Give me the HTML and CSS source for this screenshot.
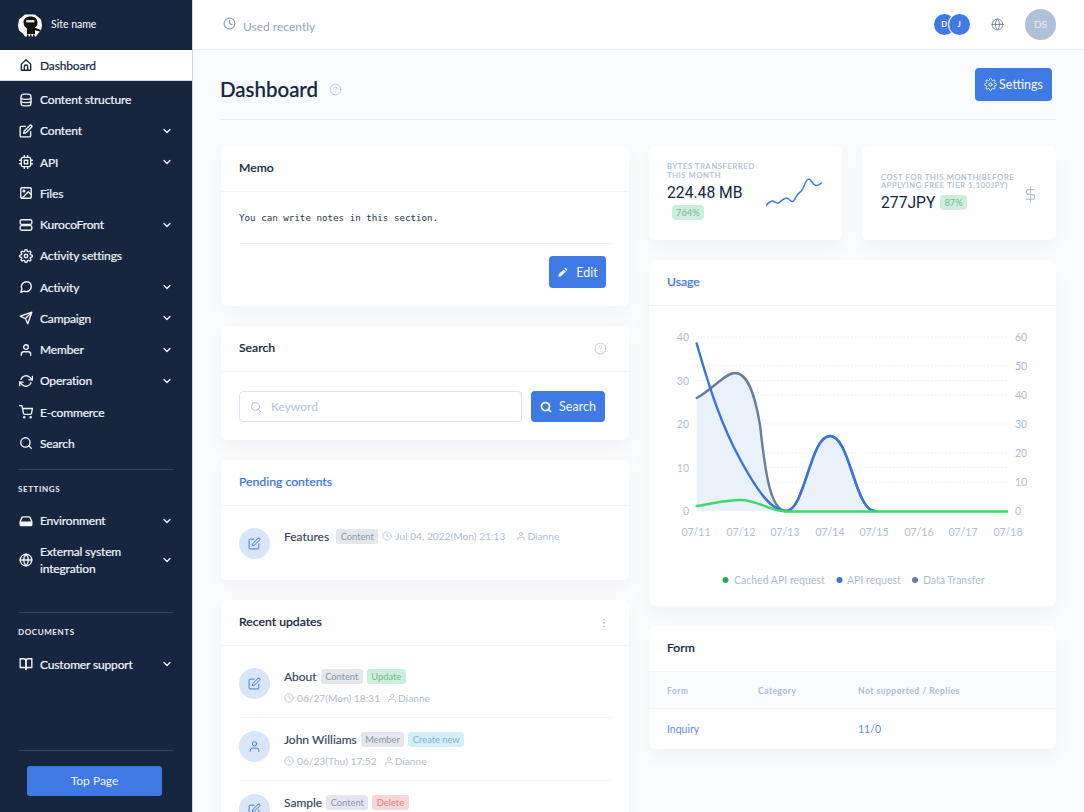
FILE: index.html
```html
<!DOCTYPE html>
<html lang="en">
<head>
<meta charset="utf-8">
<title>Dashboard</title>
<link rel="stylesheet" href="styles.css">
</head>
<body>
<svg class="sprite" xmlns="http://www.w3.org/2000/svg">
  <symbol id="i-home" viewBox="0 0 24 24"><path d="M4 10.500 12 3l8 7.500V20a1 1 0 0 1-1 1H5a1 1 0 0 1-1-1z"/><path d="M9 21v-6a3 3 0 0 1 6 0v6"/></symbol>
  <symbol id="i-db" viewBox="0 0 24 24"><rect x="3.500" y="2" width="17" height="20" rx="5"/><path d="M3.500 9.500c3 2 14 2 17 0M3.500 15c3 2 14 2 17 0"/></symbol>
  <symbol id="i-edit" viewBox="0 0 24 24"><path d="M11 4H4a2 2 0 0 0-2 2v14a2 2 0 0 0 2 2h14a2 2 0 0 0 2-2v-7"/><path d="M18.500 2.500a2.121 2.121 0 0 1 3 3L12 15l-4 1 1-4 9.500-9.500z"/></symbol>
  <symbol id="i-cpu" viewBox="0 0 24 24"><rect x="4" y="4" width="16" height="16" rx="3"/><rect x="9" y="9" width="6" height="6"/><path d="M9 1v3M15 1v3M9 20v3M15 20v3M20 9h3M20 15h3M1 9h3M1 15h3"/></symbol>
  <symbol id="i-image" viewBox="0 0 24 24"><rect x="3" y="3" width="18" height="18" rx="2"/><circle cx="8.500" cy="8.500" r="1.500"/><path d="M21 15l-5-5L5 21"/></symbol>
  <symbol id="i-server" viewBox="0 0 24 24"><rect x="2" y="3" width="20" height="8" rx="2.500"/><rect x="2" y="13" width="20" height="8" rx="2.500"/></symbol>
  <symbol id="i-gear" viewBox="0 0 24 24"><circle cx="12" cy="12" r="3"/><path d="M19.400 15a1.650 1.650 0 0 0 .33 1.820l.06.06a2 2 0 0 1 0 2.830 2 2 0 0 1-2.830 0l-.06-.06a1.650 1.650 0 0 0-1.820-.33 1.650 1.650 0 0 0-1 1.510V21a2 2 0 0 1-2 2 2 2 0 0 1-2-2v-.09A1.650 1.650 0 0 0 9 19.400a1.650 1.650 0 0 0-1.820.33l-.06.06a2 2 0 0 1-2.830 0 2 2 0 0 1 0-2.830l.06-.06a1.650 1.650 0 0 0 .33-1.820 1.650 1.650 0 0 0-1.510-1H3a2 2 0 0 1-2-2 2 2 0 0 1 2-2h.09A1.650 1.650 0 0 0 4.600 9a1.650 1.650 0 0 0-.33-1.820l-.06-.06a2 2 0 0 1 0-2.830 2 2 0 0 1 2.830 0l.06.06a1.650 1.650 0 0 0 1.820.33H9a1.650 1.650 0 0 0 1-1.510V3a2 2 0 0 1 2-2 2 2 0 0 1 2 2v.09a1.650 1.650 0 0 0 1 1.510 1.650 1.650 0 0 0 1.820-.33l.06-.06a2 2 0 0 1 2.830 0 2 2 0 0 1 0 2.830l-.06.06a1.650 1.650 0 0 0-.33 1.820V9a1.650 1.650 0 0 0 1.510 1H21a2 2 0 0 1 2 2 2 2 0 0 1-2 2h-.09a1.650 1.650 0 0 0-1.510 1z"/></symbol>
  <symbol id="i-msg" viewBox="0 0 24 24"><path d="M21 11.500a8.380 8.380 0 0 1-.9 3.800 8.500 8.500 0 0 1-7.600 4.700 8.380 8.380 0 0 1-3.800-.9L3 21l1.900-5.700a8.380 8.380 0 0 1-.9-3.800 8.500 8.500 0 0 1 4.700-7.600 8.380 8.380 0 0 1 3.800-.9h.5a8.480 8.480 0 0 1 8 8v.5z"/></symbol>
  <symbol id="i-send" viewBox="0 0 24 24"><path d="M22 2 11 13M22 2l-7 20-4-9-9-4z"/></symbol>
  <symbol id="i-user" viewBox="0 0 24 24"><path d="M20 21v-2a4 4 0 0 0-4-4H8a4 4 0 0 0-4 4v2"/><circle cx="12" cy="7" r="4"/></symbol>
  <symbol id="i-refresh" viewBox="0 0 24 24"><path d="M23 4v6h-6M1 20v-6h6"/><path d="M3.510 9a9 9 0 0 1 14.850-3.360L23 10M1 14l4.640 4.360A9 9 0 0 0 20.490 15"/></symbol>
  <symbol id="i-cart" viewBox="0 0 24 24"><circle cx="9" cy="21" r="1"/><circle cx="20" cy="21" r="1"/><path d="M1 1h4l2.680 13.390a2 2 0 0 0 2 1.610h9.720a2 2 0 0 0 2-1.610L23 6H6"/></symbol>
  <symbol id="i-search" viewBox="0 0 24 24"><circle cx="11" cy="11" r="8"/><path d="M21 21l-4.350-4.350"/></symbol>
  <symbol id="i-drive" viewBox="0 0 24 24"><path d="M2 13 5 6.200A2 2 0 0 1 6.800 5h10.400A2 2 0 0 1 19 6.200L22 13v5a2 2 0 0 1-2 2H4a2 2 0 0 1-2-2z"/><path class="solid" d="M2 13h20v5a2 2 0 0 1-2 2H4a2 2 0 0 1-2-2z"/></symbol>
  <symbol id="i-globe" viewBox="0 0 24 24"><circle cx="12" cy="12" r="10"/><path d="M2 12h20"/><path d="M12 2a15.300 15.300 0 0 1 4 10 15.300 15.300 0 0 1-4 10 15.300 15.300 0 0 1-4-10 15.300 15.300 0 0 1 4-10z"/></symbol>
  <symbol id="i-book" viewBox="0 0 24 24"><path d="M2 3h6a4 4 0 0 1 4 4v14a3 3 0 0 0-3-3H2z"/><path d="M22 3h-6a4 4 0 0 0-4 4v14a3 3 0 0 1 3-3h7z"/></symbol>
  <symbol id="i-clock" viewBox="0 0 24 24"><circle cx="12" cy="12" r="10"/><path d="M12 6v6l4 2"/></symbol>
  <symbol id="i-help" viewBox="0 0 24 24"><circle cx="12" cy="12" r="10"/><path d="M9.090 9a3 3 0 0 1 5.830 1c0 2-3 3-3 3M12 17h.01"/></symbol>
  <symbol id="i-chev" viewBox="0 0 24 24"><path d="M6 9l6 6 6-6"/></symbol>
  <symbol id="i-dollar" viewBox="0 0 24 24"><path d="M12 1v22"/><path d="M17 5H9.500a3.500 3.500 0 0 0 0 7h5a3.500 3.500 0 0 1 0 7H6"/></symbol>
  <symbol id="i-more" viewBox="0 0 24 24"><circle cx="12" cy="5" r="1"/><circle cx="12" cy="12" r="1"/><circle cx="12" cy="19" r="1"/></symbol>
  <symbol id="i-pencil" viewBox="0 0 24 24"><path class="solid" d="M3 21.500l1.200-6L14.500 5.200l4.800 4.800L9 20.300zM16 3.700l1.600-1.500a1.500 1.500 0 0 1 2.100 0l2.600 2.600a1.500 1.500 0 0 1 0 2.100L20.700 8.500z"/></symbol>
</svg>

<div class="app">
  <aside class="sidebar">
    <div class="brand">
      <svg class="logo" viewBox="0 0 24 24" aria-hidden="true">
        <path class="logo-bg" d="M7 .500h10l6 5 1 6-1 5-3 3-2 3H7l-2-3-4-3-1-5 1-6z"/>
        <path class="logo-ninja" d="M5.500 8.500C5.500 4.500 8.500 2.500 12.500 2.500S19.500 4.500 19.500 8.500c0 2.500-1 4.200-2.500 5.300l6 2.200-.7 1.800L17 16.300V20H9v-5.500C6.800 13 5.500 11 5.500 8.500z"/>
        <rect class="logo-eye" x="8" y="6" width="8.500" height="2.500" rx="1"/>
        <path class="logo-ninja" d="M9 20.500h1.500V23H9zM12 20.500h1.500V23H12zM15 20.500h1.500V23H15z"/>
      </svg>
      <span class="brand-name">Site name</span>
    </div>
    <a class="nav-item active"><svg class="ico"><use href="#i-home"/></svg><span>Dashboard</span></a>
    <nav class="nav-list">
      <a class="nav-item"><svg class="ico"><use href="#i-db"/></svg><span>Content structure</span></a>
      <a class="nav-item"><svg class="ico"><use href="#i-edit"/></svg><span>Content</span><svg class="chev"><use href="#i-chev"/></svg></a>
      <a class="nav-item"><svg class="ico"><use href="#i-cpu"/></svg><span>API</span><svg class="chev"><use href="#i-chev"/></svg></a>
      <a class="nav-item"><svg class="ico"><use href="#i-image"/></svg><span>Files</span></a>
      <a class="nav-item"><svg class="ico"><use href="#i-server"/></svg><span>KurocoFront</span><svg class="chev"><use href="#i-chev"/></svg></a>
      <a class="nav-item"><svg class="ico"><use href="#i-gear"/></svg><span>Activity settings</span></a>
      <a class="nav-item"><svg class="ico"><use href="#i-msg"/></svg><span>Activity</span><svg class="chev"><use href="#i-chev"/></svg></a>
      <a class="nav-item"><svg class="ico"><use href="#i-send"/></svg><span>Campaign</span><svg class="chev"><use href="#i-chev"/></svg></a>
      <a class="nav-item"><svg class="ico"><use href="#i-user"/></svg><span>Member</span><svg class="chev"><use href="#i-chev"/></svg></a>
      <a class="nav-item"><svg class="ico"><use href="#i-refresh"/></svg><span>Operation</span><svg class="chev"><use href="#i-chev"/></svg></a>
      <a class="nav-item"><svg class="ico"><use href="#i-cart"/></svg><span>E-commerce</span></a>
      <a class="nav-item"><svg class="ico"><use href="#i-search"/></svg><span>Search</span></a>
    </nav>
    <hr class="side-rule rule-settings">
    <div class="side-label">SETTINGS</div>
    <a class="nav-item"><svg class="ico"><use href="#i-drive"/></svg><span>Environment</span><svg class="chev"><use href="#i-chev"/></svg></a>
    <a class="nav-item tall"><svg class="ico"><use href="#i-globe"/></svg><span>External system<br>integration</span><svg class="chev"><use href="#i-chev"/></svg></a>
    <hr class="side-rule rule-docs">
    <div class="side-label">DOCUMENTS</div>
    <a class="nav-item"><svg class="ico"><use href="#i-book"/></svg><span>Customer support</span><svg class="chev"><use href="#i-chev"/></svg></a>
    <div class="side-foot">
      <hr class="side-rule foot-rule">
      <a class="top-btn">Top Page</a>
    </div>
  </aside>

  <div class="main">
    <header class="topbar">
      <svg class="ico top-clock"><use href="#i-clock"/></svg>
      <span class="recent">Used recently</span>
      <div class="top-right">
        <div class="avatars"><span class="mini">D</span><span class="mini second">J</span></div>
        <svg class="ico top-globe"><use href="#i-globe"/></svg>
        <span class="me">DS</span>
      </div>
    </header>

    <div class="content">
      <div class="page-head">
        <h1>Dashboard</h1>
        <svg class="ico help title-help"><use href="#i-help"/></svg>
        <a class="btn settings-btn"><svg class="ico"><use href="#i-gear"/></svg>Settings</a>
      </div>

      <div class="columns">
        <div class="col">
          <section class="card">
            <div class="card-head"><h2>Memo</h2></div>
            <div class="memo-body">
              <pre class="memo-text">You can write notes in this section.</pre>
              <div class="memo-foot"><a class="btn edit-btn"><svg class="ico"><use href="#i-pencil"/></svg>Edit</a></div>
            </div>
          </section>

          <section class="card">
            <div class="card-head"><h2>Search</h2><svg class="ico help"><use href="#i-help"/></svg></div>
            <div class="search-body">
              <label class="search-field"><svg class="ico"><use href="#i-search"/></svg><span>Keyword</span></label>
              <a class="btn search-btn"><svg class="ico"><use href="#i-search"/></svg>Search</a>
            </div>
          </section>

          <section class="card">
            <div class="card-head"><h2 class="link">Pending contents</h2></div>
            <div class="pending-body">
              <span class="round"><svg class="ico"><use href="#i-edit"/></svg></span>
              <div class="inline-row">
                <span class="row-title">Features</span>
                <span class="tag gray">Content</span>
                <span class="meta"><svg class="ico"><use href="#i-clock"/></svg>Jul 04, 2022(Mon) 21:13</span>
                <span class="meta by"><svg class="ico"><use href="#i-user"/></svg>Dianne</span>
              </div>
            </div>
          </section>

          <section class="card">
            <div class="card-head"><h2>Recent updates</h2><svg class="ico more"><use href="#i-more"/></svg></div>
            <div class="updates">
              <div class="update">
                <span class="round"><svg class="ico"><use href="#i-edit"/></svg></span>
                <div>
                  <div class="title-line"><span class="row-title">About</span><span class="tag gray">Content</span><span class="tag green">Update</span></div>
                  <div class="meta-line"><span class="meta"><svg class="ico"><use href="#i-clock"/></svg>06/27(Mon) 18:31</span><span class="meta by"><svg class="ico"><use href="#i-user"/></svg>Dianne</span></div>
                </div>
              </div>
              <div class="update">
                <span class="round"><svg class="ico"><use href="#i-user"/></svg></span>
                <div>
                  <div class="title-line"><span class="row-title">John Williams</span><span class="tag gray">Member</span><span class="tag blue">Create new</span></div>
                  <div class="meta-line"><span class="meta"><svg class="ico"><use href="#i-clock"/></svg>06/23(Thu) 17:52</span><span class="meta by"><svg class="ico"><use href="#i-user"/></svg>Dianne</span></div>
                </div>
              </div>
              <div class="update">
                <span class="round"><svg class="ico"><use href="#i-edit"/></svg></span>
                <div>
                  <div class="title-line"><span class="row-title">Sample</span><span class="tag gray">Content</span><span class="tag red">Delete</span></div>
                </div>
              </div>
            </div>
          </section>
        </div>

        <div class="col">
          <div class="stats">
            <section class="card stat stat-a">
              <div class="stat-text">
                <div class="stat-label">BYTES TRANSFERRED<br>THIS MONTH</div>
                <div class="stat-value">224.48 MB</div>
                <span class="tag green pct pct-under">764%</span>
              </div>
              <svg class="spark" viewBox="0 0 60 30" aria-hidden="true"><path d="M0.500 28c3-3 4-4.500 6.500-4 2.500.8 3 3 5.500 2 3-2 5-5 8-5 3.500.5 4 4.500 6.500 3.500 3-3 3.500-7 6-8.500 3-1.500 4-4 5.500-8 1-3 2.500-6 4.500-6 2.500.5 3.500 6 7 6.500 2.500.3 4-1.500 5.500-2.500"/></svg>
            </section>
            <section class="card stat stat-b">
              <div class="stat-text">
                <div class="stat-label">COST FOR THIS MONTH(BEFORE<br>APPLYING FREE TIER 1,100JPY)</div>
                <div class="stat-line"><span class="stat-value">277JPY</span><span class="tag green pct">87%</span></div>
              </div>
              <svg class="ico dollar"><use href="#i-dollar"/></svg>
            </section>
          </div>

          <section class="card">
            <div class="card-head"><h2 class="link">Usage</h2></div>
            <svg class="chart" viewBox="649 306 407 300" role="img" aria-label="Usage chart">
              <g class="grid">
                <path d="M697 337h310M697 366h310M697 380.500h310M697 395h310M697 424h310M697 453h310M697 467.500h310M697 482h310"/>
              </g>
              <path class="area" d="M696.700 398C712 390 725 373 735 373c13 0 20 22 25 52 5 45 10 86 26 86 19 0 24-75 44-75s25 75 45 75H696.700z"/>
              <path class="line-gray" d="M696.700 398C712 390 725 373 735 373c13 0 20 22 25 52 5 45 10 86 26 86 19 0 24-75 44-75s25 75 45 75"/>
              <path class="line-blue" d="M696.700 343.500C710 390 722 427 741 461c16 29 30 50 45 50 19 0 24-75 44-75s25 75 45 75"/>
              <path class="line-green" d="M696.700 506c14-2 28-6 44-6 16 0 30 11 45 11.500H1007"/>
              <g class="axis left">
                <text x="689" y="341">40</text><text x="689" y="385">30</text><text x="689" y="428">20</text><text x="689" y="472">10</text><text x="689" y="515">0</text>
              </g>
              <g class="axis right">
                <text x="1015" y="341">60</text><text x="1015" y="370">50</text><text x="1015" y="399">40</text><text x="1015" y="428">30</text><text x="1015" y="457">20</text><text x="1015" y="486">10</text><text x="1015" y="515">0</text>
              </g>
              <g class="axis days">
                <text x="696" y="536">07/11</text><text x="741" y="536">07/12</text><text x="785" y="536">07/13</text><text x="830" y="536">07/14</text><text x="874" y="536">07/15</text><text x="919" y="536">07/16</text><text x="963" y="536">07/17</text><text x="1008" y="536">07/18</text>
              </g>
              <g class="legend">
                <circle class="dot-green" cx="725.500" cy="580" r="3"/><text x="734" y="584">Cached API request</text>
                <circle class="dot-blue" cx="839.500" cy="580" r="3"/><text x="847" y="584">API request</text>
                <circle class="dot-gray" cx="915" cy="580" r="3"/><text x="923" y="584">Data Transfer</text>
              </g>
            </svg>
          </section>

          <section class="card">
            <div class="card-head"><h2>Form</h2></div>
            <div class="form-grid form-th"><span>Form</span><span>Category</span><span>Not supported / Replies</span></div>
            <div class="form-grid form-td"><a>Inquiry</a><span></span><a>11/0</a></div>
          </section>
        </div>
      </div>
    </div>
  </div>
</div>
</body>
</html>
```

FILE: styles.css
```css
* { box-sizing: border-box; }
html, body { margin: 0; height: 100%; overflow: hidden; }
body { font-family: "Lato", "Liberation Sans", sans-serif; font-size: 13px; color: #12263f; background: #f9fbfd; }
.sprite { position: absolute; width: 0; height: 0; overflow: hidden; }
.ico, .chev { fill: none; stroke: currentColor; stroke-width: 2; stroke-linecap: round; stroke-linejoin: round; flex: none; }
.solid { fill: currentColor; stroke: none; }
.ico { width: 14px; height: 14px; }
a { text-decoration: none; }
h1, h2 { margin: 0; font-weight: 500; -webkit-text-stroke: .2px currentColor; }

.app { display: flex; height: 812px; overflow: hidden; }

.sidebar { width: 193px; flex: none; height: 812px; display: flex; flex-direction: column; background: #16263f; border-right: 1px solid #cfd6e0; color: #f2f5f9; }
.brand { height: 50px; flex: none; display: flex; align-items: center; padding-left: 18px; gap: 9px; }
.logo { width: 24px; height: 24px; margin-top: 1px; }
.logo-bg { fill: #fff; }
.logo-ninja { fill: #111; }
.logo-eye { fill: #ddd; }
.brand-name { font-size: 10.500px; color: #fff; margin-top: -2px; }

.nav-item { display: flex; align-items: center; height: 31.250px; padding: 0 19px; font-size: 12px; letter-spacing: -.15px; -webkit-text-stroke: .2px currentColor; color: #f2f5f9; flex: none; }
.nav-item .ico { width: 14px; height: 14px; margin-right: 7px; stroke-width: 2.300; }
.nav-item span { flex: 1; line-height: 17px; }
.chev { width: 12px; height: 12px; stroke-width: 2.500; }
.nav-item.active { background: #fff; color: #12263f; height: 31px; border-bottom: 1px solid #cfd6e0; }
.nav-item.tall { height: 47px; }
.nav-list { margin-top: 3px; }
.side-rule { border: 0; height: 1px; background: #33425e; margin: 0 19px 0 18px; flex: none; }
.rule-settings { margin-top: 10px; }
.rule-docs { margin-top: 28.500px; }
.side-label { font-size: 8px; font-weight: 700; letter-spacing: .6px; color: #e8edf4; padding-left: 18px; margin: 11px 0 8px; height: 16px; line-height: 16px; flex: none; }
.rule-docs + .side-label { margin-bottom: 9px; }
.side-foot { margin-top: auto; padding-bottom: 16px; }
.foot-rule { margin: 0 19px 15px 18px; }
.top-btn { display: block; margin: 0 30px 0 27px; height: 30px; line-height: 30px; text-align: center; background: #3f79e3; border-radius: 3px; color: #f2f6fd; font-size: 12px; }

.main { flex: 1; min-width: 0; height: 812px; display: flex; flex-direction: column; overflow: hidden; }
.topbar { height: 50px; flex: none; background: #fff; border-bottom: 1px solid #e9edf3; display: flex; align-items: center; padding: 0 28px 0 30px; color: #8d9cb3; }
.top-clock { margin: -3px 7px 0 0; width: 13px; height: 13px; }
.recent { font-size: 12px; color: #95a3b9; margin-top: 3px; }
.top-right { margin-left: auto; display: flex; align-items: center; }
.avatars { display: flex; margin-right: 21.500px; }
.mini { width: 21px; height: 21px; border-radius: 50%; background: #3f79e3; color: #fff; font-size: 7.500px; font-weight: 700; text-align: center; line-height: 21px; }
.mini.second { margin-left: -6px; box-shadow: 0 0 0 1px #fff; }
.top-globe { color: #76879f; width: 13px; height: 13px; margin-right: 21px; stroke-width: 1.700; }
.me { width: 31px; height: 31px; border-radius: 50%; background: #b1c0d9; color: #e9eef6; font-size: 10px; text-align: center; line-height: 31px; }

.content { flex: 1; padding: 0 28px; min-height: 0; }
.page-head { height: 70px; border-bottom: 1px solid #e9edf3; display: flex; align-items: flex-start; padding-top: 18px; }
h1 { font-size: 20.500px; line-height: 26px; margin: 8px 0 0 -1px; }
.help { color: #b1c2d9; width: 13px; height: 13px; stroke-width: 1.500; }
.title-help { margin: 15px 0 0 11px; }
.btn { display: inline-flex; align-items: center; justify-content: center; background: #3f79e3; color: #f5f8fe; border-radius: 4px; font-size: 12.500px; }
.settings-btn { margin: 0 4px 0 auto; width: 77px; height: 33px; gap: 2px; }
.settings-btn .ico { width: 13px; height: 13px; stroke-width: 1.800; }

.columns { display: grid; grid-template-columns: 408px 407px; gap: 20px; margin-top: 26px; }
.col { display: flex; flex-direction: column; gap: 20px; min-width: 0; }
.card { background: #fff; border-radius: 6px; box-shadow: 0 8px 20px rgba(18, 38, 63, .035); }
.card-head { height: 46px; padding: 0 18px; display: flex; align-items: center; justify-content: space-between; border-bottom: 1px solid #f1f4f8; }
h2 { font-size: 12.200px; color: #12263f; margin-top: -3px; }
h2.link { color: #3f79e3; }
.card-head .help { margin-right: 4px; }
.more { color: #b1c2d9; width: 12px; height: 12px; margin-right: 1px; }

.memo-body { padding: 0 18px; height: 114px; }
.memo-text { margin: 0; padding: 17px 0 0; height: 52px; font: 9.200px/18px "DejaVu Sans Mono", monospace; color: #27384f; border-bottom: 1px solid #eff2f6; }
.memo-foot { display: flex; justify-content: flex-end; padding: 12px 5px 0 0; }
.edit-btn { width: 57px; height: 32px; gap: 8px; }
.edit-btn .ico { width: 11px; height: 11px; }

.search-body { display: flex; gap: 9px; padding: 19px 24px 18px 18px; }
.search-field { flex: 1; height: 31px; border: 1px solid #dde4ef; border-radius: 4px; display: flex; align-items: center; gap: 9px; padding-left: 10px; color: #a9b8cf; font-size: 12px; }
.search-field .ico { width: 12px; height: 12px; stroke-width: 1.800; }
.search-field span { color: #b5c2d7; }
.search-btn { width: 74px; height: 31px; gap: 7px; }
.search-btn .ico { width: 12px; height: 12px; stroke-width: 3.500; }

.round { width: 31px; height: 31px; border-radius: 50%; background: #d9e5f9; color: #3f79e3; display: flex; align-items: center; justify-content: center; flex: none; }
.round .ico { width: 13px; height: 13px; stroke-width: 1.800; }
.pending-body { display: flex; gap: 14px; padding: 22px 18px 21px; height: 74px; }
.inline-row { display: flex; align-items: center; height: 18px; gap: 4px; margin-top: -1px; }
.row-title { font-size: 12px; color: #33445c; -webkit-text-stroke: .15px currentColor; }
.inline-row .tag { margin-left: 3px; }
.tag { display: inline-block; font-size: 9.300px; line-height: 15px; height: 15px; padding: 0 4.500px; border-radius: 3px; }
.tag.gray { background: #e3e6ec; color: #8b97a8; }
.tag.green { background: #cdeedc; color: #77b893; }
.tag.blue { background: #d5edf8; color: #7cb6dc; }
.tag.red { background: #f8d5d8; color: #e5838d; }
.meta { display: inline-flex; align-items: center; gap: 3px; font-size: 10.200px; color: #b1bdd0; }
.meta .ico { width: 10px; height: 10px; stroke-width: 1.500; color: #9fafc6; }
.meta.by { gap: 1px; margin-left: 7px; }

.updates { padding: 0 18px; }
.update { display: flex; gap: 14px; height: 63px; padding-top: 13px; border-bottom: 1px solid #f1f4f8; }
.update:first-child { height: 72px; padding-top: 22px; }
.title-line { display: flex; align-items: center; gap: 4px; height: 18px; margin: -1px 0 4px; }
.title-line .tag:first-of-type { margin-left: 6px; }
.meta-line { display: flex; align-items: center; height: 18px; }

.stats { display: grid; grid-template-columns: 193px 194px; gap: 20px; height: 94px; }
.stat { display: flex; align-items: center; padding: 0 18px; }
.stat-a { align-items: flex-start; padding-top: 17px; }
.stat-b { padding: 0 20px 0 19px; }
.stat-text { flex: 1; min-width: 0; }
.stat-label { font-size: 7.500px; line-height: 8.500px; letter-spacing: .7px; color: #aebcd4; white-space: nowrap; -webkit-text-stroke: .15px currentColor; }
.stat-value { font-family: "Roboto", sans-serif; font-size: 15.700px; line-height: 20px; color: #12263f; }
.stat-a .stat-value { margin-top: 3px; }
.stat-a .pct { margin-top: -1px; }
.stat-line { display: flex; align-items: center; gap: 5px; margin-top: 2px; }
.pct { line-height: 15px; padding: 0 4px; border-radius: 4px; }
.pct-under { margin-left: 5px; }
.spark { width: 60px; height: 30px; margin: 14px -2px 0 0; fill: none; stroke: #3f79e3; stroke-width: 1.500; stroke-linecap: round; stroke-linejoin: round; }
.dollar { color: #b1c2d9; width: 17px; height: 17px; stroke-width: 1.700; margin: 2px -3px 0 0; }

.chart { display: block; width: 407px; height: 300px; font-size: 10.500px; }
.grid path { fill: none; stroke: #e9edf4; stroke-width: 1; stroke-dasharray: 1.500 2; }
.area { fill: #e9f1fb; }
.line-gray, .line-blue, .line-green { fill: none; stroke-linecap: round; stroke-width: 2.400; }
.line-gray { stroke: #6b7d9c; }
.line-blue { stroke: #3a72de; }
.line-green { stroke: #3bd96e; }
.axis text { fill: #aebcd4; }
.axis.left text { text-anchor: end; }
.axis.days text { text-anchor: middle; }
.legend text { fill: #aebcd4; font-size: 10.500px; }
.dot-green { fill: #27a95a; }
.dot-blue { fill: #3a72de; }
.dot-gray { fill: #6b7d9c; }

.form-grid { display: grid; grid-template-columns: 91px 100px 1fr; padding: 0 18px; align-items: center; }
.form-th { height: 37px; background: #f9fbfd; border-bottom: 1px solid #f1f4f8; font-size: 8.500px; letter-spacing: .5px; color: #aebcd4; font-weight: 700; }
.form-th span { padding-top: 1px; }
.form-td { height: 40px; font-size: 10.500px; }
.form-td a { color: #5f8ae5; }
```
